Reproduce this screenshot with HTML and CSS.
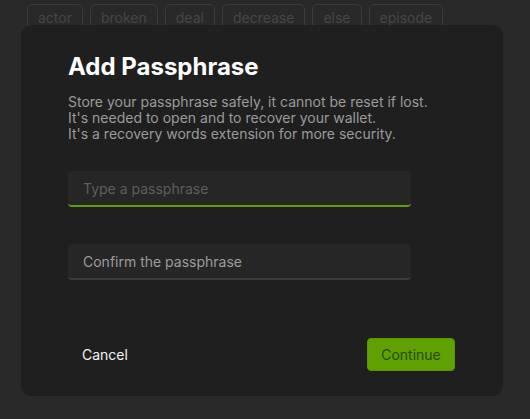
FILE: index.html
```html
<!DOCTYPE html>
<html lang="en">
<head>
<meta charset="utf-8">
<title>Add Passphrase</title>
<link rel="stylesheet" href="styles.css">
</head>
<body>
<div class="tags">
  <span class="tag">actor</span>
  <span class="tag">broken</span>
  <span class="tag">deal</span>
  <span class="tag">decrease</span>
  <span class="tag">else</span>
  <span class="tag">episode</span>
</div>
<div class="dialog">
  <h1 class="title">Add Passphrase</h1>
  <p class="desc">Store your passphrase safely, it cannot be reset if lost.<br>It's needed to open and to recover your wallet.<br>It's a recovery words extension for more security.</p>
  <div class="fields">
    <div class="field active"><span class="placeholder">Type a passphrase</span></div>
    <div class="field"><span class="label">Confirm the passphrase</span></div>
  </div>
  <div class="actions">
    <button class="btn-cancel">Cancel</button>
    <button class="btn-continue">Continue</button>
  </div>
</div>
</body>
</html>
```
FILE: styles.css
```css
* { box-sizing: border-box; }
html, body { margin: 0; height: 100%; }
body {
  background: #292929;
  font-family: Inter, "Noto Sans", sans-serif;
  position: relative;
  overflow: hidden;
}
.tags {
  display: flex;
  gap: 7px;
  padding: 4px 0 0 27px;
}
.tag {
  border: 1px solid #3b3b3b;
  border-radius: 5px;
  color: #464646;
  font-size: 14px;
  padding: 4px 10px 10px;
  line-height: 17px;
}
.dialog {
  position: absolute;
  left: 21px;
  top: 25px;
  width: 482px;
  height: 371px;
  background: #1f1f1f;
  border-radius: 10px;
  padding: 27px 47px 0;
  display: flex;
  flex-direction: column;
}
.title {
  margin: 0;
  color: #fff;
  font-size: 24px;
  font-weight: 700;
  line-height: 29px;
}
.desc {
  margin: 13px 0 0;
  color: #9b9b9b;
  font-size: 14px;
  line-height: 16px;
}
.fields {
  margin-top: 29px;
  display: flex;
  flex-direction: column;
  gap: 37px;
  width: 343px;
}
.field {
  height: 36px;
  background: #262626;
  border-radius: 4px;
  border-bottom: 2px solid #3c3c3c;
  padding: 0 15px;
  display: flex;
  align-items: center;
  font-size: 14px;
}
.field.active { border-bottom-color: #5fa100; }
.placeholder { color: #5e5e5e; }
.label { color: #9c9c9c; }
.actions {
  margin-top: 58px;
  display: flex;
  justify-content: space-between;
  align-items: center;
}
button { font-family: inherit; font-size: 14px; cursor: pointer; }
.btn-cancel {
  background: none;
  border: none;
  color: #f2f2f2;
  padding: 0 0 0 14px;
}
.btn-continue {
  background: #5fa100;
  color: #2c4a07;
  border: 1px solid #5a9600;
  border-radius: 4px;
  width: 88px;
  height: 33px;
  margin-right: 1px;
}
```
